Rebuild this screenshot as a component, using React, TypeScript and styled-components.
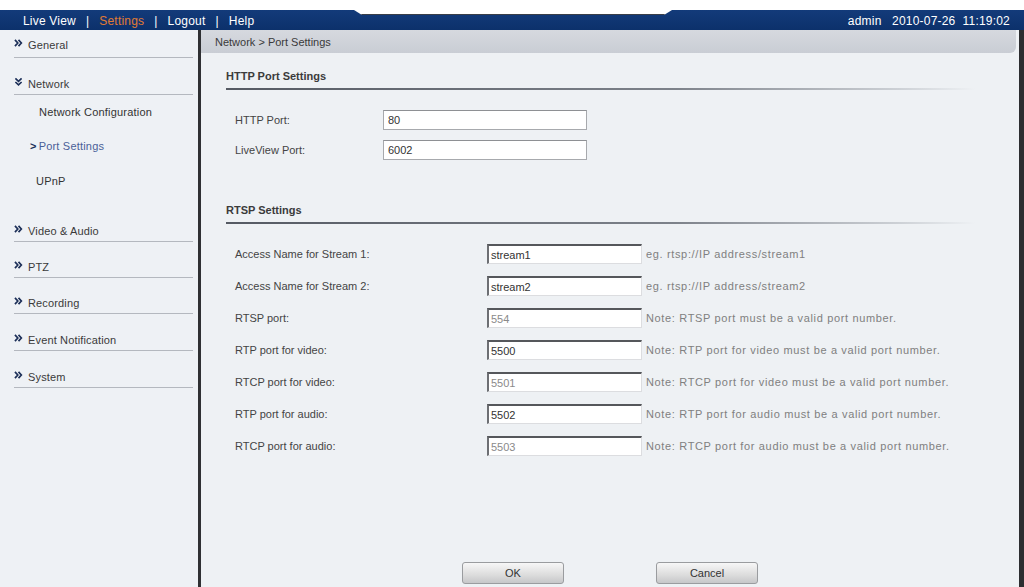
import styled, { createGlobalStyle } from "styled-components";

const GlobalStyle = createGlobalStyle`
  html, body {
    margin: 0;
    padding: 0;
    background: #fff;
  }
  body {
    font-family: "Liberation Sans", Arial, sans-serif;
    font-size: 11px;
    color: #333;
  }
`;

// menu data
interface MenuItem {
  title: string;
  open?: boolean;
  height: number;
  pb?: number;
  children?: { title: string; active?: boolean; height: number }[];
}

const menu: MenuItem[] = [
  { title: "General", height: 28, pb: 6 },
  {
    title: "Network",
    height: 37,
    open: true,
    children: [
      { title: "Network Configuration", height: 34 },
      { title: "Port Settings", active: true, height: 34 },
      { title: "UPnP", height: 36 },
    ],
  },
  { title: "Video & Audio", height: 43 },
  { title: "PTZ", height: 36 },
  { title: "Recording", height: 36 },
  { title: "Event Notification", height: 37 },
  { title: "System", height: 37 },
];

interface rtspRow {
  label: string;
  value: string;
  dim?: boolean;
  hint: string;
}

const rtspRows: rtspRow[] = [
  { label: "Access Name for Stream 1:", value: "stream1", hint: "eg. rtsp://IP address/stream1" },
  { label: "Access Name for Stream 2:", value: "stream2", hint: "eg. rtsp://IP address/stream2" },
  { label: "RTSP port:", value: "554", dim: true, hint: "Note: RTSP port must be a valid port number." },
  { label: "RTP port for video:", value: "5500", hint: "Note: RTP port for video must be a valid port number." },
  { label: "RTCP port for video:", value: "5501", dim: true, hint: "Note: RTCP port for video must be a valid port number." },
  { label: "RTP port for audio:", value: "5502", hint: "Note: RTP port for audio must be a valid port number." },
  { label: "RTCP port for audio:", value: "5503", dim: true, hint: "Note: RTCP port for audio must be a valid port number." },
];

const Chevron = ({ down }: { down?: boolean }) => (
  <ChevronSvg viewBox="0 0 10 9" $down={down}>
    <path d="M1 1 L4.2 4.5 L1 8 M5 1 L8.2 4.5 L5 8" fill="none" stroke="#1c2f58" strokeWidth="1.9" />
  </ChevronSvg>
);

const App = () => {
  return (
    <Page>
      <GlobalStyle />
      <TopStrip />
      <Header>
        <Notch />
        <NavLinks>
          <NavLink>Live View</NavLink>
          <Sep>|</Sep>
          <NavLink $active>Settings</NavLink>
          <Sep>|</Sep>
          <NavLink>Logout</NavLink>
          <Sep>|</Sep>
          <NavLink>Help</NavLink>
        </NavLinks>
        <UserInfo>admin&nbsp;&nbsp; 2010-07-26&nbsp; 11:19:02</UserInfo>
      </Header>
      <Body>
        <Sidebar>
          {menu.map((item, i) => (
            <div key={i}>
              <MenuTitle $h={item.height} $pb={item.pb}>
                <Chevron down={item.open} />
                <span>{item.title}</span>
              </MenuTitle>
              {item.children?.map((c, j) => (
                <SubItem key={j} $h={c.height} $active={c.active} $last={j === 2}>
                  {c.active && <Arrow>&gt;</Arrow>}
                  {c.title}
                </SubItem>
              ))}
            </div>
          ))}
        </Sidebar>
        <Main>
          <Breadcrumb>Network &gt; Port Settings</Breadcrumb>
          <Content>
            <SectionTitle>HTTP Port Settings</SectionTitle>
            <HttpRows>
              <HttpRow>
                <HttpLabel>HTTP Port:</HttpLabel>
                <HttpInput defaultValue="80" />
              </HttpRow>
              <HttpRow>
                <HttpLabel>LiveView Port:</HttpLabel>
                <HttpInput defaultValue="6002" />
              </HttpRow>
            </HttpRows>

            <SectionTitle $top={43}>RTSP Settings</SectionTitle>
            <RtspRows>
              {rtspRows.map((row, i) => (
                <RtspRow key={i}>
                  <RtspLabel>{row.label}</RtspLabel>
                  <RtspInput defaultValue={row.value} $dim={row.dim} />
                  <Hint>{row.hint}</Hint>
                </RtspRow>
              ))}
            </RtspRows>
          </Content>
          <Buttons>
            <Button>OK</Button>
            <Button>Cancel</Button>
          </Buttons>
        </Main>
      </Body>
    </Page>
  );
};

const Page = styled.div`
  width: 1024px;
  height: 587px;
  display: flex;
  flex-direction: column;
  overflow: hidden;
`;

const TopStrip = styled.div`
  height: 10px;
  background: #fff;
`;

const Header = styled.header`
  position: relative;
  height: 20px;
  background: linear-gradient(#133b7a, #0c316b);
  display: flex;
  align-items: center;
  justify-content: space-between;
  padding: 0 14px 0 23px;
  color: #fff;
  font-size: 12px;
`;

const Notch = styled.div`
  position: absolute;
  top: 0;
  left: 354px;
  width: 318px;
  height: 4px;
  background: #fff;
  border-bottom: 1px solid #3a3f48;
  clip-path: polygon(0 0, 100% 0, calc(100% - 8px) 100%, 8px 100%);
`;

const NavLinks = styled.nav`
  display: flex;
  align-items: center;
  gap: 10px;
  letter-spacing: 0.2px;
  padding-top: 1px;
`;

const NavLink = styled.span<{ $active?: boolean }>`
  color: ${(p) => (p.$active ? "#e27b34" : "#fff")};
`;

const Sep = styled.span`
  color: #fff;
`;

const UserInfo = styled.span`
  color: #fff;
  padding-top: 1px;
  letter-spacing: 0.2px;
`;

const Body = styled.div`
  flex: 1;
  display: flex;
  min-height: 0;
`;

const Sidebar = styled.aside`
  width: 179px;
  padding: 0 5px 0 14px;
  background: #eef1f5;
  border-right: 3px solid #2f3033;
`;

const MenuTitle = styled.div<{ $h: number; $pb?: number }>`
  height: ${(p) => p.$h}px;
  display: flex;
  align-items: flex-end;
  gap: 5px;
  padding-bottom: ${(p) => p.$pb ?? 4}px;
  box-sizing: border-box;
  border-bottom: 1px solid #b4b8bf;
  line-height: 14px;
  color: #3a3a3a;
  font-size: 11px;
  letter-spacing: 0.15px;
  span {
    position: relative;
    top: 1px;
  }
`;

const ChevronSvg = styled.svg<{ $down?: boolean }>`
  width: 9px;
  height: 8px;
  margin-bottom: 4px;
  transform: ${(p) => (p.$down ? "rotate(90deg)" : "none")};
`;

const SubItem = styled.div<{ $h: number; $active?: boolean; $last?: boolean }>`
  height: ${(p) => p.$h}px;
  display: flex;
  align-items: center;
  padding-left: ${(p) => (p.$active ? 16 : p.$last ? 22 : 25)}px;
  color: ${(p) => (p.$active ? "#4a5f98" : "#333")};
  font-size: 11px;
  letter-spacing: 0.2px;
`;

const Arrow = styled.span`
  color: #1c2f58;
  font-weight: bold;
  margin-right: 2px;
`;

const Main = styled.main`
  flex: 1;
  display: flex;
  flex-direction: column;
  background: #eef1f4;
  border-right: 5px solid #2c2d30;
`;

const Breadcrumb = styled.div`
  height: 23px;
  margin-right: 3px;
  padding-left: 14px;
  display: flex;
  align-items: center;
  background: linear-gradient(#d6d9df, #c9cdd4);
  border-radius: 0 0 6px 0;
  color: #3a3a3a;
  font-size: 11px;
`;

const Content = styled.div`
  padding: 0 44px 0 25px;
`;

const SectionTitle = styled.div<{ $top?: number }>`
  margin-top: ${(p) => p.$top ?? 16}px;
  padding-bottom: 5px;
  line-height: 14px;
  font-weight: bold;
  font-size: 11px;
  color: #3b3b3b;
  position: relative;
  &::after {
    content: "";
    position: absolute;
    left: 0;
    right: 0;
    bottom: -2px;
    height: 2px;
    background: linear-gradient(to right, #555a63, #7d828a 60%, #cdd1d6 90%, rgba(238, 241, 244, 0));
  }
`;

const HttpRows = styled.div`
  margin-top: 22px;
  display: flex;
  flex-direction: column;
  gap: 10px;
`;

const HttpRow = styled.div`
  display: flex;
  align-items: center;
  padding-left: 9px;
`;

const HttpLabel = styled.span`
  width: 148px;
  color: #444;
`;

const HttpInput = styled.input`
  width: 204px;
  height: 20px;
  box-sizing: border-box;
  border: 1px solid #a7a9ad;
  border-top-color: #8e9094;
  background: #fff;
  padding: 0 4px;
  font-family: "Liberation Sans", Arial, sans-serif;
  font-size: 11px;
  color: #333;
  outline: none;
`;

const RtspRows = styled.div`
  margin-top: 22px;
  display: flex;
  flex-direction: column;
  gap: 12px;
`;

const RtspRow = styled.div`
  display: flex;
  align-items: center;
  padding-left: 9px;
`;

const RtspLabel = styled.span`
  width: 252px;
  color: #444;
`;

const RtspInput = styled.input<{ $dim?: boolean }>`
  width: 155px;
  height: 20px;
  box-sizing: border-box;
  border-style: solid;
  border-width: 2px 1px 1px 2px;
  border-color: #55575b #dcdde0 #dcdde0 #6d6f73;
  background: #fff;
  padding: 0 2px;
  font-family: "Liberation Sans", Arial, sans-serif;
  font-size: 11px;
  color: ${(p) => (p.$dim ? "#8a8a8a" : "#333")};
  outline: none;
`;

const Hint = styled.span`
  margin-left: 4px;
  color: #808080;
  font-size: 11px;
  letter-spacing: 0.65px;
`;

const Buttons = styled.div`
  margin-top: auto;
  margin-bottom: 3px;
  display: flex;
  justify-content: center;
  gap: 92px;
`;

const Button = styled.button`
  width: 102px;
  height: 22px;
  border: 1px solid #9a9c9f;
  border-radius: 3px;
  background: linear-gradient(#f7f7f7, #dcdcdc 60%, #c6c7c9);
  font-family: "Liberation Sans", Arial, sans-serif;
  font-size: 11px;
  color: #333;
`;

export default App;
